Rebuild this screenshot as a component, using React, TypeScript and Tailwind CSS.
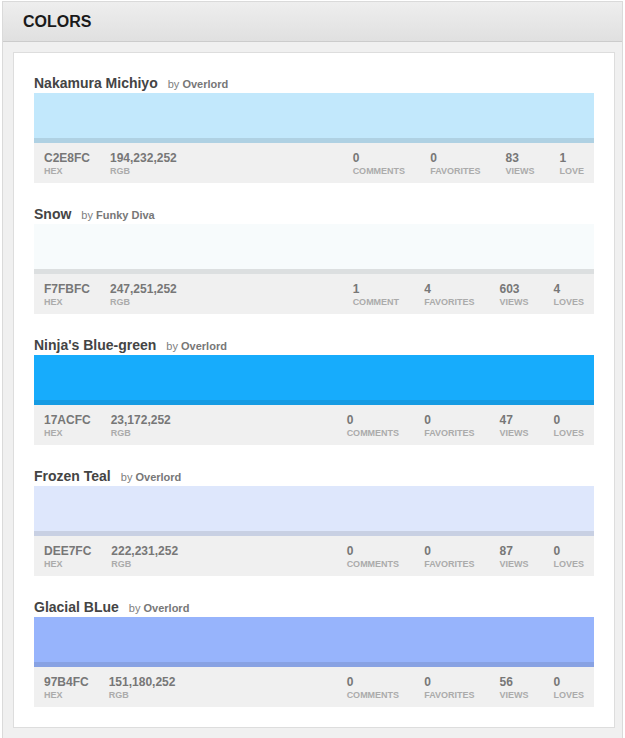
import React from "react";

type Color = {
  name: string;
  by: string;
  hex: string;
  rgb: string;
  swatch: string;
  strip: string;
  comments: string;
  commentsLabel: string;
  favorites: string;
  views: string;
  loves: string;
  lovesLabel: string;
};

const colors: Color[] = [
  {
    name: "Nakamura Michiyo",
    by: "Overlord",
    hex: "C2E8FC",
    rgb: "194,232,252",
    swatch: "bg-[#c2e8fc]",
    strip: "bg-[#afd1e3]",
    comments: "0",
    commentsLabel: "COMMENTS",
    favorites: "0",
    views: "83",
    loves: "1",
    lovesLabel: "LOVE",
  },
  {
    name: "Snow",
    by: "Funky Diva",
    hex: "F7FBFC",
    rgb: "247,251,252",
    swatch: "bg-[#f7fbfc]",
    strip: "bg-[#dcdfe0]",
    comments: "1",
    commentsLabel: "COMMENT",
    favorites: "4",
    views: "603",
    loves: "4",
    lovesLabel: "LOVES",
  },
  {
    name: "Ninja's Blue-green",
    by: "Overlord",
    hex: "17ACFC",
    rgb: "23,172,252",
    swatch: "bg-[#17acfc]",
    strip: "bg-[#159be3]",
    comments: "0",
    commentsLabel: "COMMENTS",
    favorites: "0",
    views: "47",
    loves: "0",
    lovesLabel: "LOVES",
  },
  {
    name: "Frozen Teal",
    by: "Overlord",
    hex: "DEE7FC",
    rgb: "222,231,252",
    swatch: "bg-[#dee7fc]",
    strip: "bg-[#c8d0e3]",
    comments: "0",
    commentsLabel: "COMMENTS",
    favorites: "0",
    views: "87",
    loves: "0",
    lovesLabel: "LOVES",
  },
  {
    name: "Glacial BLue",
    by: "Overlord",
    hex: "97B4FC",
    rgb: "151,180,252",
    swatch: "bg-[#97b4fc]",
    strip: "bg-[#88a2e3]",
    comments: "0",
    commentsLabel: "COMMENTS",
    favorites: "0",
    views: "56",
    loves: "0",
    lovesLabel: "LOVES",
  },
];

function Stat({ value, label }: { value: string; label: string }) {
  return (
    <div className="flex flex-col">
      <span className="text-[12px] leading-[16px] font-bold text-[#777777]">{value}</span>
      <span className="text-[9px] leading-[10px] font-bold text-[#ababab]">{label}</span>
    </div>
  );
}

function ColorCard({ c }: { c: Color }) {
  return (
    <div className="flex flex-col">
      <div className="flex items-baseline">
        <span className="text-[14px] leading-[16px] font-bold text-[#444444]">{c.name}</span>
        <span className="ml-[10px] text-[11px] leading-[16px] text-[#808080]">
          by <span className="font-bold text-[#777777]">{c.by}</span>
        </span>
      </div>
      <div className={`mt-[1px] h-[45px] ${c.swatch}`} />
      <div className={`h-[5px] ${c.strip}`} />
      <div className="flex h-[40px] bg-[#f0f0f0] pl-[10px] pr-[10px] pt-[7px]">
        <div className="flex gap-[20px]">
          <Stat value={c.hex} label="HEX" />
          <Stat value={c.rgb} label="RGB" />
        </div>
        <div className="ml-auto flex gap-[25px]">
          <Stat value={c.comments} label={c.commentsLabel} />
          <Stat value={c.favorites} label="FAVORITES" />
          <Stat value={c.views} label="VIEWS" />
          <Stat value={c.loves} label={c.lovesLabel} />
        </div>
      </div>
    </div>
  );
}

export default function App() {
  return (
    <div className="w-[625px] h-[738px] bg-white font-['Liberation_Sans',Arial,Helvetica,sans-serif]">
      <div className="ml-[2px] mt-[1px] w-[621px] h-[737px] bg-[#f0f0f0] border-x border-t border-[#dadada]">
        <div className="h-[40px] border-b border-[#cccccc] bg-gradient-to-b from-[#eeeeee] to-[#e0e0e0] flex items-center pl-[20px]">
          <h1 className="text-[16px] leading-[20px] font-bold text-[#1a1a1a] mt-[1px]">COLORS</h1>
        </div>
        <div className="ml-[10px] mt-[10px] w-[602px] bg-white border border-[#dddddd] pt-[22px] pb-[20px] px-[20px] flex flex-col gap-[23px]">
          {colors.map((c) => (
            <ColorCard key={c.hex} c={c} />
          ))}
        </div>
      </div>
    </div>
  );
}
